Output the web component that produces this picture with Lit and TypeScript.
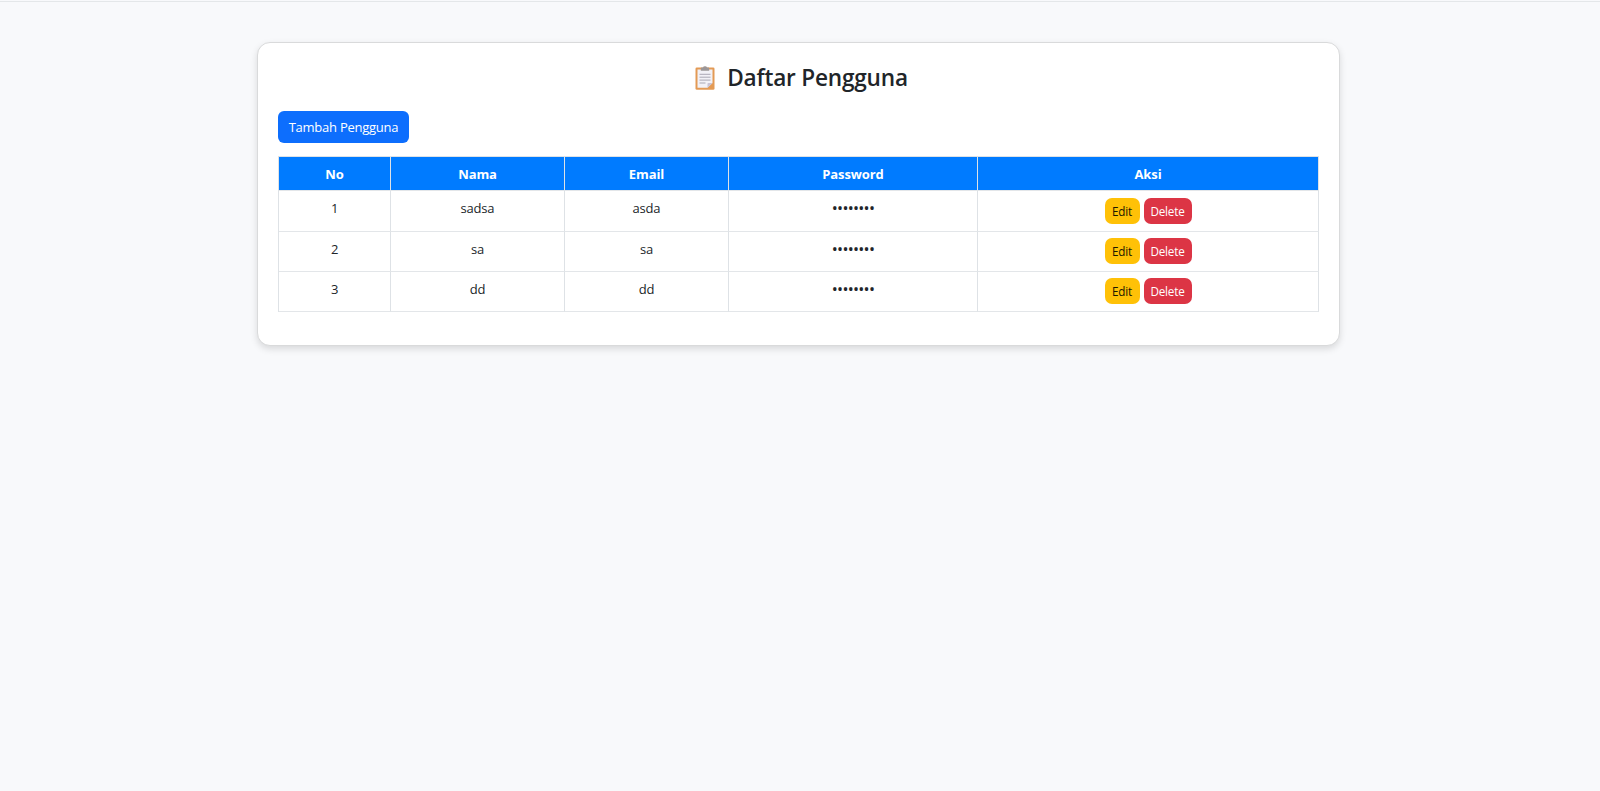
import { LitElement, html, css } from "lit";
import { customElement, state } from "lit/decorators.js";

interface Pengguna {
  nama: string;
  email: string;
}

@customElement("app-root")
export class AppRoot extends LitElement {
  @state() private rows: Pengguna[] = [
    { nama: "sadsa", email: "asda" },
    { nama: "sa", email: "sa" },
    { nama: "dd", email: "dd" },
  ];

  static styles = css`
    :host {
      display: block;
      box-sizing: border-box;
      height: 791px;
      padding-top: 1px;
      background: #f8f9fb;
      color: #212529;
      font-family: "Open Sans", "Noto Sans", sans-serif;
      font-size: 13px;
      line-height: 20px;
    }
    * {
      box-sizing: border-box;
    }
    .rule {
      height: 1px;
      background: #e4e7e9;
    }
    .card {
      width: 1083px;
      height: 304px;
      margin: 40px 0 0 257px;
      padding: 20px 20px 0;
      background: #fff;
      border: 1px solid #d9dadb;
      border-radius: 13px;
      box-shadow: 0 3px 7px rgba(0, 0, 0, 0.13);
    }
    .title {
      display: flex;
      justify-content: center;
      align-items: center;
      gap: 12px;
      height: 30px;
      margin: 0 0 18px;
      padding-left: 6px;
      font-size: 22.6px;
      line-height: 30px;
    }
    .title svg {
      display: block;
      width: 20px;
      height: 24px;
    }
    .title-text {
      letter-spacing: -0.2px;
      font-weight: 550;
    }
    .btn {
      display: inline-flex;
      align-items: center;
      justify-content: center;
      border: 0;
      padding: 0;
      font: inherit;
      white-space: nowrap;
    }
    .add {
      display: flex;
      width: 131px;
      height: 32px;
      border-radius: 6px;
      background: #0d6efd;
      color: #fff;
      letter-spacing: -0.25px;
    }
    .table {
      display: grid;
      grid-template-columns: 112px 174px 164px 249px 341px;
      grid-template-rows: 34px 41px 40px 40px;
      width: 1041px;
      margin-top: 13px;
      border-top: 1px solid #dee2e6;
      border-left: 1px solid #dee2e6;
      text-align: center;
    }
    .cell,
    .head {
      border-right: 1px solid #dee2e6;
      border-bottom: 1px solid #e3e6e9;
    }
    .head {
      padding-top: 7px;
      background: #007bff;
      color: #fff;
      font-weight: 700;
      letter-spacing: -0.1px;
    }
    .cell {
      padding-top: 7px;
      letter-spacing: -0.2px;
    }
    .dots {
      font-size: 16px;
      letter-spacing: -0.72px;
    }
    .actions {
      display: flex;
      justify-content: center;
      gap: 4px;
      padding-top: 6px;
    }
    .actions.first {
      padding-top: 7px;
    }
    .small {
      height: 26px;
      border-radius: 7px;
      font-size: 11.7px;
      letter-spacing: -0.2px;
    }
    .edit {
      width: 35px;
      background: #ffc107;
      color: #1c1800;
    }
    .delete {
      width: 48px;
      background: #dc3545;
      color: #fff;
    }
  `;

  private clipboard() {
    return html`<svg viewBox="0 0 20 24" aria-hidden="true">
      <rect x="0.5" y="1.5" width="19" height="22.2" rx="1.3" fill="#e39a55" />
      <path d="M2.5 3.5H17.5V17L12.5 21.7H2.5Z" fill="#f2f1f7" />
      <path d="M12.5 21.7V17.8Q12.5 17 13.3 17H17.5Z" fill="#c9c3d3" />
      <path d="M5.8 4.7V2.4Q5.8 1.6 6.6 1.6H8Q8.2 .2 10 .2T12 1.6H13.4Q14.2 1.6 14.2 2.4V4.7Z" fill="#9b9697" />
      <path d="M4.5 8.3H15.5M4.5 11.2H15.5M4.5 14.1H15.5M4.5 17H10.5" stroke="#aaa8b4" stroke-width="1" />
    </svg>`;
  }

  render() {
    return html`
      <div class="rule"></div>
      <main class="card">
        <h2 class="title">${this.clipboard()}<span class="title-text">Daftar Pengguna</span></h2>
        <button class="btn add">Tambah Pengguna</button>
        <div class="table">
          ${["No", "Nama", "Email", "Password", "Aksi"].map((h) => html`<div class="head">${h}</div>`)}
          ${this.rows.map(
            (r, i) => html`
              <div class="cell">${i + 1}</div>
              <div class="cell">${r.nama}</div>
              <div class="cell">${r.email}</div>
              <div class="cell dots">••••••••</div>
              <div class="cell actions ${i === 0 ? "first" : ""}">
                <button class="btn small edit">Edit</button>
                <button class="btn small delete">Delete</button>
              </div>
            `
          )}
        </div>
      </main>
    `;
  }
}
